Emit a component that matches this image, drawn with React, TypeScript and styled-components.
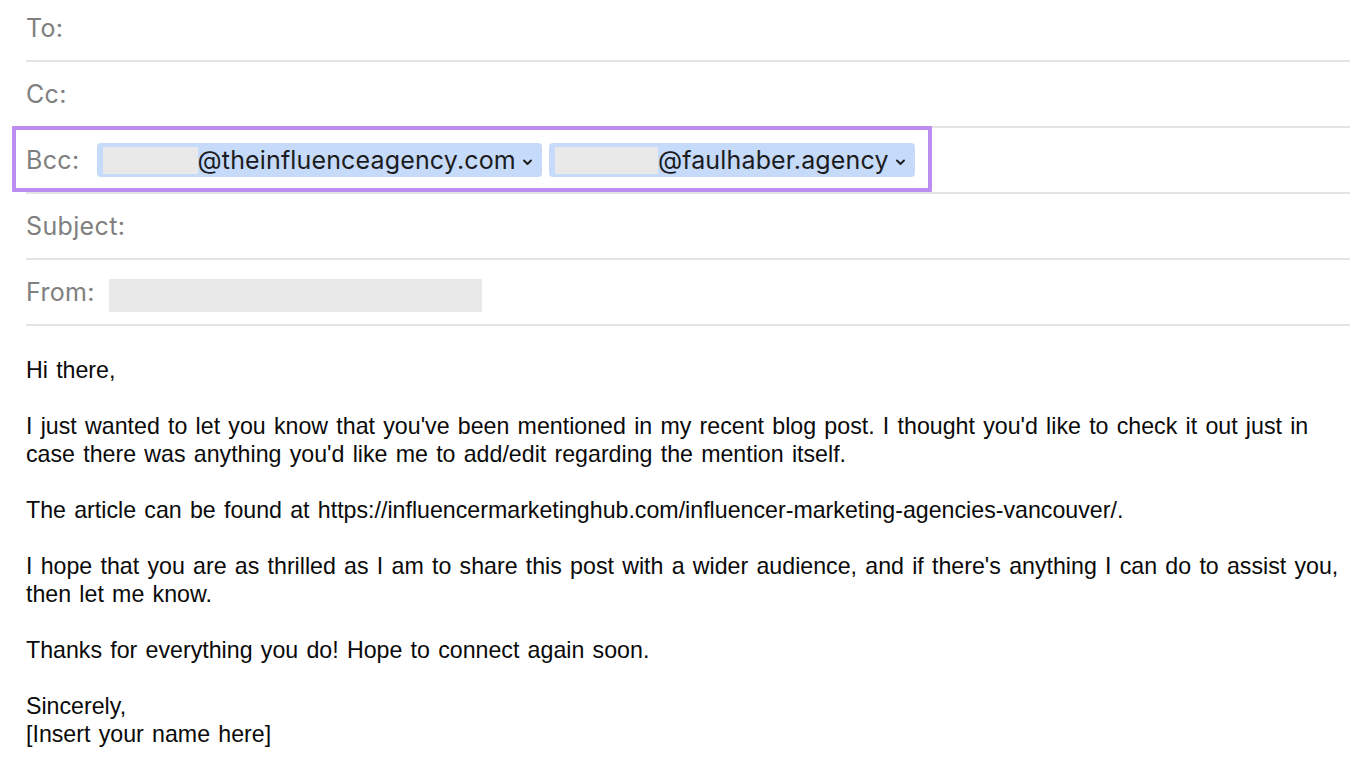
import React from "react";
import styled, { createGlobalStyle } from "styled-components";

const Global = createGlobalStyle`
  html, body { margin: 0; padding: 0; background: #ffffff; }
  body { overflow: hidden; }
`;

const Page = styled.div`
  width: 1350px;
  height: 772px;
  overflow: hidden;
  background: #fff;
`;

const Header = styled.div`
  margin-top: -4px;
  padding-left: 26px;
`;

const Row = styled.div`
  position: relative;
  display: flex;
  align-items: center;
  height: 64px;
  border-bottom: 2px solid #e4e4e4;
  font-family: Inter, "Noto Sans", sans-serif;
  font-size: 25px;
`;

const Label = styled.span<{ $gap?: number }>`
  color: #808080;
  letter-spacing: 0.35px;
  margin-right: ${(p) => p.$gap ?? 14}px;
`;

const Highlight = styled.div`
  position: absolute;
  left: -14px;
  top: -2px;
  width: 912px;
  height: 58px;
  border: 4px solid #bd8cf2;
  border-radius: 1px;
  pointer-events: none;
`;

const Chips = styled.div`
  display: flex;
  gap: 7px;
  align-items: center;
`;

const Chip = styled.div`
  display: flex;
  align-items: center;
  height: 34px;
  padding: 0 9px 0 6px;
  background: #c6daf9;
  border-radius: 4px;
  color: #1c1c1e;
`;

const Redact = styled.span<{ $w: number; $h?: number }>`
  display: inline-block;
  width: ${(p) => p.$w}px;
  height: ${(p) => p.$h ?? 27}px;
  background: #e9e9e9;
`;

const Address = styled.span`
  letter-spacing: 0.15px;
`;

const Chevron = styled.svg`
  margin-left: 6px;
  width: 11px;
  height: 11px;
  margin-top: 4px;
`;

const FromBox = styled(Redact)`
  margin-top: 7px;
`;

const Body = styled.div`
  padding: 30px 0 0 26px;
  font-family: "Liberation Sans", Arial, sans-serif;
  font-size: 23.2px;
  word-spacing: 1.8px;
  line-height: 28px;
  color: #0a0a0a;
  white-space: nowrap;
`;

const Para = styled.p`
  margin: 0 0 28px 0;
`;

const Down = () => (
  <Chevron viewBox="0 0 11 11">
    <path d="M2 3.5 L5.5 7 L9 3.5" fill="none" stroke="#1c1c1e" strokeWidth="1.9" strokeLinecap="round" strokeLinejoin="round" />
  </Chevron>
);

export default function App() {
  return (
    <Page>
      <Global />
      <Header>
        <Row>
          <Label>To:</Label>
        </Row>
        <Row>
          <Label>Cc:</Label>
        </Row>
        <Row>
          <Highlight />
          <Label $gap={17}>Bcc:</Label>
          <Chips>
            <Chip>
              <Redact $w={95} />
              <Address>@theinfluenceagency.com</Address>
              <Down />
            </Chip>
            <Chip>
              <Redact $w={103} />
              <Address>@faulhaber.agency</Address>
              <Down />
            </Chip>
          </Chips>
        </Row>
        <Row>
          <Label>Subject:</Label>
        </Row>
        <Row>
          <Label>From:</Label>
          <FromBox $w={373} $h={33} />
        </Row>
      </Header>
      <Body>
        <Para>Hi there,</Para>
        <Para>
          I just wanted to let you know that you've been mentioned in my recent blog post. I thought you'd like to check it out just in
          <br />
          case there was anything you'd like me to add/edit regarding the mention itself.
        </Para>
        <Para>The article can be found at https://influencermarketinghub.com/influencer-marketing-agencies-vancouver/.</Para>
        <Para>
          I hope that you are as thrilled as I am to share this post with a wider audience, and if there's anything I can do to assist you,
          <br />
          then let me know.
        </Para>
        <Para>Thanks for everything you do! Hope to connect again soon.</Para>
        <Para>
          Sincerely,
          <br />
          [Insert your name here]
        </Para>
      </Body>
    </Page>
  );
}
